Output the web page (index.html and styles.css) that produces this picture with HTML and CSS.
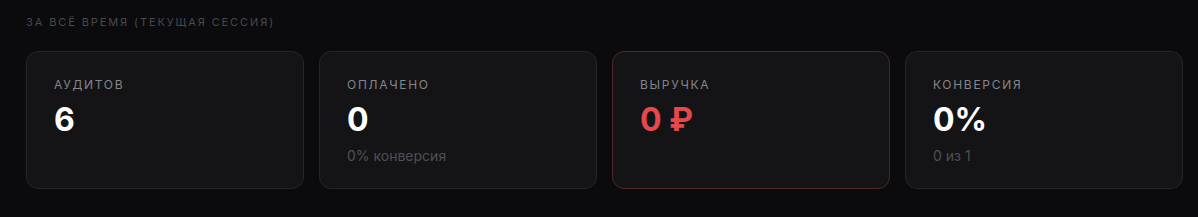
FILE: index.html
```html
<!DOCTYPE html>
<html lang="ru">
<head>
<meta charset="utf-8">
<link rel="stylesheet" href="styles.css">
</head>
<body>
<section class="stats">
  <div class="stats-title">За всё время (текущая сессия)</div>
  <div class="cards">
    <div class="card">
      <div class="card-label">Аудитов</div>
      <div class="card-value">6</div>
    </div>
    <div class="card">
      <div class="card-label">Оплачено</div>
      <div class="card-value">0</div>
      <div class="card-sub">0% конверсия</div>
    </div>
    <div class="card card-accent">
      <div class="card-label">Выручка</div>
      <div class="card-value value-red">0 ₽</div>
    </div>
    <div class="card">
      <div class="card-label">Конверсия</div>
      <div class="card-value">0%</div>
      <div class="card-sub">0 из 1</div>
    </div>
  </div>
</section>
</body>
</html>
```
FILE: styles.css
```css
* { box-sizing: border-box; }
html, body {
  margin: 0;
  background: #0b0b0d;
  font-family: Inter, "Noto Sans", sans-serif;
}
.stats {
  padding: 16px 15px 0 26px;
}
.stats-title {
  font-size: 11px;
  line-height: 13px;
  letter-spacing: 1.9px;
  text-transform: uppercase;
  color: #48484d;
  margin-bottom: 22px;
}
.cards {
  display: grid;
  grid-template-columns: repeat(4, 1fr);
  gap: 15px;
}
.card {
  height: 138px;
  background: #141416;
  border: 1px solid #26262a;
  border-radius: 12px;
  padding: 26px 27px;
}
.card-accent {
  border-color: #52242a;
}
.card-label {
  font-size: 12px;
  line-height: 14px;
  letter-spacing: 1.7px;
  text-transform: uppercase;
  color: #85858b;
}
.card-value {
  margin-top: 10px;
  font-size: 32px;
  line-height: 36px;
  font-weight: 700;
  color: #ffffff;
}
.value-red { color: #e5484d; }
.card-sub {
  margin-top: 9px;
  font-size: 14px;
  line-height: 17px;
  color: #4f4f55;
}
```
